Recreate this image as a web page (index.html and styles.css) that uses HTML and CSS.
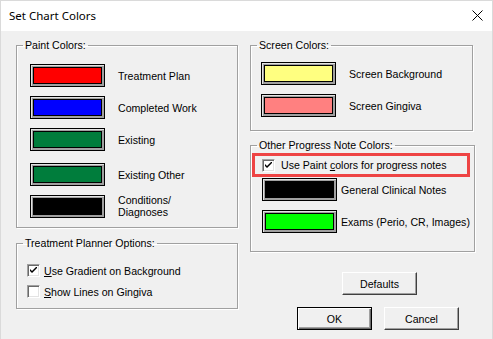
FILE: index.html
```html
<!DOCTYPE html>
<html lang="en">
    <head>
        <meta charset="UTF-8" />
        <title>Set Chart Colors</title>
        <link rel="stylesheet" href="styles.css">
    </head>
    <body>
        <div class="window">
            <header class="titlebar">
                <span class="title">Set Chart Colors</span>
                <svg class="close" width="11" height="11" viewBox="0 0 11 11">
                    <path d="M0.5 0.5 L10.5 10.5 M10.5 0.5 L0.5 10.5" stroke="#000" stroke-width="1" fill="none" />
                </svg>
            </header>

            <main class="dialog">
                <div class="col col-left">
                    <fieldset class="group">
                        <legend>Paint Colors:</legend>
                        <div class="group-body paint">
                            <div class="color-row">
                                <span class="swatch"><span class="fill red"></span></span>
                                <span class="label">Treatment Plan</span>
                            </div>
                            <div class="color-row">
                                <span class="swatch"><span class="fill blue"></span></span>
                                <span class="label">Completed Work</span>
                            </div>
                            <div class="color-row">
                                <span class="swatch"><span class="fill green"></span></span>
                                <span class="label">Existing</span>
                            </div>
                            <div class="color-row loose">
                                <span class="swatch"><span class="fill green"></span></span>
                                <span class="label">Existing Other</span>
                            </div>
                            <div class="color-row tight">
                                <span class="swatch"><span class="fill black"></span></span>
                                <span class="label">Conditions/<br>Diagnoses</span>
                            </div>
                        </div>
                    </fieldset>

                    <fieldset class="group planner">
                        <legend>Treatment Planner Options:</legend>
                        <div class="group-body options">
                            <label class="check-row">
                                <span class="checkbox checked">
                                    <svg width="7" height="7" viewBox="0 0 7 7"><path d="M0 2 L0 4 L2 6 L7 1 L7 -1 L2 4 Z" fill="#000" /></svg>
                                </span>
                                <span><u>U</u>se Gradient on Background</span>
                            </label>
                            <label class="check-row">
                                <span class="checkbox"></span>
                                <span><u>S</u>how Lines on Gingiva</span>
                            </label>
                        </div>
                    </fieldset>
                </div>

                <div class="col col-right">
                    <fieldset class="group">
                        <legend>Screen Colors:</legend>
                        <div class="group-body screen">
                            <div class="color-row">
                                <span class="swatch"><span class="fill yellow"></span></span>
                                <span class="label">Screen Background</span>
                            </div>
                            <div class="color-row">
                                <span class="swatch"><span class="fill pink"></span></span>
                                <span class="label">Screen Gingiva</span>
                            </div>
                        </div>
                    </fieldset>

                    <fieldset class="group progress">
                        <legend>Other Progress Note Colors:</legend>
                        <div class="group-body notes">
                            <div class="highlight">
                                <label class="check-row">
                                    <span class="checkbox checked">
                                        <svg width="7" height="7" viewBox="0 0 7 7"><path d="M0 2 L0 4 L2 6 L7 1 L7 -1 L2 4 Z" fill="#000" /></svg>
                                    </span>
                                    <span>Use Paint <u>c</u>olors for progress notes</span>
                                </label>
                            </div>
                            <div class="color-row near">
                                <span class="swatch"><span class="fill black"></span></span>
                                <span class="label">General Clinical Notes</span>
                            </div>
                            <div class="color-row near">
                                <span class="swatch"><span class="fill lime"></span></span>
                                <span class="label">Exams (Perio, CR, Images)</span>
                            </div>
                        </div>
                    </fieldset>

                    <div class="buttons">
                        <button class="btn defaults">Defaults</button>
                        <div class="btn-row">
                            <button class="btn default">OK</button>
                            <button class="btn">Cancel</button>
                        </div>
                    </div>
                </div>
            </main>
        </div>
    </body>
</html>
```

FILE: styles.css
```css
* {
    box-sizing: border-box;
}
body {
    margin: 0;
    font-family: "Liberation Sans", Arial, sans-serif;
    font-size: 10.6px;
    color: #000;
    background-color: #f0f0f0;
}

.window {
    width: 493px;
    height: 339px;
    background-color: #f0f0f0;
    border: 1px solid #dadada;
    border-bottom: 0;
    display: flex;
    flex-direction: column;
}

.titlebar {
    height: 30px;
    background-color: #fff;
    display: flex;
    align-items: center;
    justify-content: space-between;
    padding: 0 9px 0 8px;
}

.title {
    font-family: "Noto Sans", "Open Sans", sans-serif;
    font-size: 11.5px;
    margin-top: -1px;
}

.close {
    display: block;
    margin-top: -1px;
}

.dialog {
    display: flex;
    gap: 12px;
    padding: 8px 0 0 15px;
}

.col {
    display: flex;
    flex-direction: column;
}

.col-left {
    width: 222px;
}

.col-right {
    width: 223px;
}

.group {
    margin: 0;
    padding: 0;
    border: 1px solid #a0a0a0;
    box-shadow: inset 1px 1px 0 #fff, 1px 1px 0 #fff;
}

.group legend {
    margin-left: 6px;
    padding: 0 2px;
    line-height: 13px;
}

.planner {
    margin-top: 9px;
}

.progress {
    margin-top: 8px;
}

.paint {
    padding: 12px 0 9px 13px;
}

.screen {
    padding: 10px 0 13px 10px;
}

.notes {
    padding: 1px 4px 18px 1px;
}

.options {
    padding: 14px 0 10px 10px;
}

.color-row {
    display: flex;
    align-items: center;
    margin-top: 9px;
}

.color-row:first-child {
    margin-top: 0;
}

.color-row.loose {
    margin-top: 12px;
}

.color-row.tight {
    margin-top: 8px;
}

.color-row.near {
    margin-top: 9px;
    margin-left: 10px;
}

.highlight + .color-row.near {
    margin-top: 1px;
}

.color-row .label {
    margin-left: 13px;
    line-height: 12px;
    white-space: nowrap;
}

.notes .color-row .label {
    margin-left: 4px;
}

.swatch {
    display: block;
    width: 75px;
    height: 23px;
    border: 1px solid #000;
    padding: 2px;
    background-color: #a0a0a0;
    box-shadow: inset 1px 1px 0 #e3e3e3;
    flex-shrink: 0;
}

.swatch .fill {
    display: block;
    height: 100%;
    border: 1px solid #000;
}

.fill.red { background-color: #ff0000; }
.fill.blue { background-color: #0000ff; }
.fill.green { background-color: #007d3c; }
.fill.black { background-color: #000; }
.fill.yellow { background-color: #ffff80; }
.fill.pink { background-color: #ff8080; }
.fill.lime { background-color: #00ff00; }

.check-row {
    display: flex;
    align-items: center;
    gap: 4px;
    height: 13px;
    white-space: nowrap;
}

.check-row + .check-row {
    margin-top: 8px;
}

.checkbox {
    width: 13px;
    height: 13px;
    background-color: #fff;
    border: 1px solid;
    border-color: #a0a0a0 #fff #fff #a0a0a0;
    box-shadow: inset 1px 1px 0 #696969, inset -1px -1px 0 #e3e3e3;
    display: flex;
    align-items: center;
    justify-content: center;
    flex-shrink: 0;
}

.highlight {
    height: 24px;
    border: 3px solid #ee4444;
    padding-left: 7px;
    display: flex;
    align-items: center;
}

.highlight .check-row {
    gap: 6px;
}

.buttons {
    display: flex;
    flex-direction: column;
    margin-top: 20px;
}

.btn {
    width: 75px;
    height: 23px;
    font: inherit;
    color: #000;
    background-color: #f0f0f0;
    border: 1px solid;
    border-color: #fff #404040 #404040 #fff;
    box-shadow: inset -1px -1px 0 #a0a0a0;
    padding: 0;
}

.btn.defaults {
    margin-left: 92px;
}

.btn-row {
    display: flex;
    gap: 12px;
    margin: 12px 0 0 47px;
}

.btn.default {
    border-color: #000;
    box-shadow: inset 1px 1px 0 #fff, inset -1px -1px 0 #696969, inset -2px -2px 0 #a0a0a0;
}
```
